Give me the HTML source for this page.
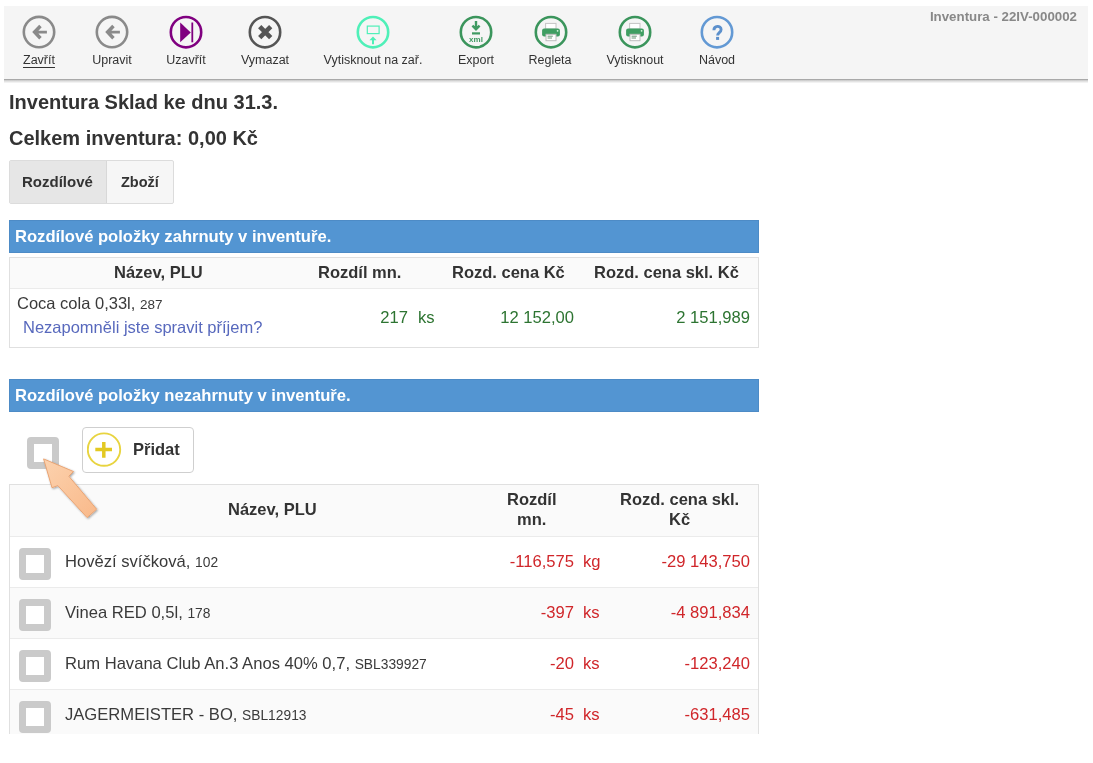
<!DOCTYPE html>
<html><head><meta charset="utf-8">
<style>
*{box-sizing:border-box}
html,body{margin:0;padding:0;background:#fff;width:1093px;height:763px;overflow:hidden}
body{font-family:"Liberation Sans",sans-serif;color:#333;position:relative}
.a{position:absolute;white-space:nowrap;line-height:normal}
#tb{position:absolute;left:4px;top:6px;width:1084px;height:73px;background:#f5f5f5}
#tbl{position:absolute;left:4px;top:79px;width:1084px;height:1px;background:#a9a9a9}
#tbs{position:absolute;left:4px;top:80px;width:1084px;height:3px;background:linear-gradient(#c6c6c6,#e6e6e6 55%,#f9f9f9)}
.ic{position:absolute;top:15px;width:34px;height:34px;overflow:visible}
.lb{position:absolute;top:53px;width:140px;text-align:center;font-size:12.5px;color:#333;white-space:nowrap}
h1{position:absolute;margin:0;left:9px;font-size:20px;font-weight:bold;color:#333;white-space:nowrap;line-height:normal}
.bar{position:absolute;left:9px;width:750px;height:33px;background:#5395d2;border:1px solid #4d8bc6}
.bt{position:absolute;left:15px;font-size:16.6px;font-weight:bold;color:#fff;white-space:nowrap}
.th{font-size:16.5px;font-weight:bold;color:#333}
.td{font-size:16.6px;color:#3a3a3a}
.sm{font-size:13.8px}
.grn{color:#2d7431}
.red{color:#d0262a}
.lnk{color:#5869bd}
.r{text-align:right}
.cb{position:absolute;width:32px;height:32px;border:7px solid #cacaca;border-radius:4px;background:#fff}
.hl{position:absolute;height:1px;background:#ebebeb}
.vl{position:absolute;width:1px;background:#dedede}
#wrap{position:absolute;left:0;top:0;width:1093px;height:763px;will-change:transform}
</style></head><body><div id="wrap">
<div id="tb"></div><div id="tbl"></div><div id="tbs"></div>

<!-- toolbar icons -->
<svg class="ic" style="left:22px" viewBox="0 0 34 34"><circle cx="17" cy="17.1" r="15.2" fill="none" stroke="#8a8a8a" stroke-width="2.6"/><path d="M10.2 17.1L17.2 9.8L19.7 12.3L16.4 15.8H24.9V18.5H16.4L19.7 21.9L17.2 24.4Z" fill="#8a8a8a"/></svg>
<div class="lb" style="left:-31px;text-decoration:underline;text-underline-offset:2.5px">Zavřít</div>

<svg class="ic" style="left:95px" viewBox="0 0 34 34"><circle cx="17" cy="17.1" r="15.2" fill="none" stroke="#8a8a8a" stroke-width="2.6"/><path d="M10.2 17.1L17.2 9.8L19.7 12.3L16.4 15.8H24.9V18.5H16.4L19.7 21.9L17.2 24.4Z" fill="#8a8a8a"/></svg>
<div class="lb" style="left:42px">Upravit</div>

<svg class="ic" style="left:169px" viewBox="0 0 34 34"><circle cx="17" cy="17.2" r="15.2" fill="none" stroke="#800080" stroke-width="2.6"/><path d="M11.2 7.5L21.8 17.4L11.2 27.3Z" fill="#800080"/><rect x="22.4" y="7.5" width="1.8" height="19.8" fill="#800080"/></svg>
<div class="lb" style="left:116px">Uzavřít</div>

<svg class="ic" style="left:248px" viewBox="0 0 34 34"><circle cx="17" cy="17.2" r="15.2" fill="none" stroke="#555" stroke-width="2.6"/><path d="M11.7 11.7L22.7 22.7M22.7 11.7L11.7 22.7" fill="none" stroke="#555" stroke-width="4.6"/></svg>
<div class="lb" style="left:195px">Vymazat</div>

<svg class="ic" style="left:356px" viewBox="0 0 34 34"><circle cx="17" cy="17.2" r="15.2" fill="none" stroke="#4ff0b8" stroke-width="2.6"/><rect x="11.3" y="11.1" width="11.8" height="7.5" fill="none" stroke="#4ff0b8" stroke-width="1.2"/><path d="M17 21.6L20.6 25.3H18V29.2H16V25.3H13.4Z" fill="#4ff0b8"/></svg>
<div class="lb" style="left:303px">Vytisknout na zař.</div>

<svg class="ic" style="left:459px" viewBox="0 0 34 34"><circle cx="17" cy="17.2" r="15.2" fill="none" stroke="#3b955c" stroke-width="2.6"/><path d="M17 6V14.2M13.4 10.6L17 14.2L20.6 10.6" fill="none" stroke="#3f9a62" stroke-width="2.4"/><rect x="13" y="17.3" width="8" height="2.2" fill="#3f9a62"/><text x="17" y="26.6" text-anchor="middle" font-size="8" font-weight="bold" fill="#3f9a62" font-family="Liberation Sans">xml</text></svg>
<div class="lb" style="left:406px">Export</div>

<svg class="ic" style="left:534px" viewBox="0 0 34 34"><circle cx="17" cy="17.2" r="15.2" fill="none" stroke="#3b955c" stroke-width="2.6"/><rect x="11.6" y="8.4" width="10.4" height="5.6" fill="#fff" stroke="#c4c4c4" stroke-width="1"/><rect x="8.1" y="13.6" width="17.8" height="8" rx="2" fill="#3f9e62"/><rect x="12" y="19.3" width="10" height="6.4" fill="#fff" stroke="#bcbcbc" stroke-width="1"/><path d="M13.6 21.2H18.8M13.6 23H18" stroke="#5a8a6a" stroke-width="0.9"/><circle cx="23.6" cy="15.8" r="0.9" fill="#d8f5e0"/></svg>
<div class="lb" style="left:480px">Regleta</div>

<svg class="ic" style="left:618px" viewBox="0 0 34 34"><circle cx="17" cy="17.2" r="15.2" fill="none" stroke="#3b955c" stroke-width="2.6"/><rect x="11.6" y="8.4" width="10.4" height="5.6" fill="#fff" stroke="#c4c4c4" stroke-width="1"/><rect x="8.1" y="13.6" width="17.8" height="8" rx="2" fill="#3f9e62"/><rect x="12" y="19.3" width="10" height="6.4" fill="#fff" stroke="#bcbcbc" stroke-width="1"/><path d="M13.6 21.2H18.8M13.6 23H18" stroke="#5a8a6a" stroke-width="0.9"/><circle cx="23.6" cy="15.8" r="0.9" fill="#d8f5e0"/></svg>
<div class="lb" style="left:565px">Vytisknout</div>

<svg class="ic" style="left:700px" viewBox="0 0 34 34"><circle cx="17" cy="17.2" r="15.2" fill="none" stroke="#6399d4" stroke-width="2.6"/><path d="M13.9 15.2C13.9 10.2 21.1 10.2 21.1 14.5C21.1 17.5 17.6 17.6 17.6 20.4" fill="none" stroke="#5c90cc" stroke-width="2.9"/><rect x="16.1" y="21.9" width="3" height="3" fill="#5c90cc"/></svg>
<div class="lb" style="left:647px">Návod</div>

<div class="a" style="right:16px;top:9px;font-size:13.3px;font-weight:bold;color:#888">Inventura - 22IV-000002</div>

<h1 style="top:91px">Inventura Sklad ke dnu 31.3.</h1>
<h1 style="top:127px">Celkem inventura: 0,00 Kč</h1>

<!-- tabs -->
<div class="a" style="left:9px;top:160px;width:165px;height:44px;border:1px solid #dcdcdc;border-radius:2px;background:#f6f6f6"></div>
<div class="a" style="left:10px;top:161px;width:97px;height:42px;background:#e6e6e6;border-right:1px solid #d8d8d8"></div>
<div class="a" style="left:22px;top:173px;font-size:15px;font-weight:bold;color:#333">Rozdílové</div>
<div class="a" style="left:121px;top:174px;font-size:14.5px;font-weight:bold;color:#333">Zboží</div>

<!-- section 1 -->
<div class="bar" style="top:220px"></div>
<div class="bt" style="top:227px">Rozdílové položky zahrnuty v inventuře.</div>

<div class="a" style="left:9px;top:257px;width:750px;height:91px;border:1px solid #e0e0e0;background:#fff"></div>
<div class="a" style="left:10px;top:258px;width:748px;height:30px;background:#fafafa"></div>
<div class="hl" style="left:10px;top:288px;width:748px"></div>
<div class="a th" style="left:114px;top:263px">Název, PLU</div>
<div class="a th" style="left:318px;top:263px">Rozdíl mn.</div>
<div class="a th" style="left:452px;top:263px">Rozd. cena Kč</div>
<div class="a th" style="left:594px;top:263px">Rozd. cena skl. Kč</div>
<div class="a td" style="left:17px;top:294px;font-size:16.5px">Coca cola 0,33l, <span style="font-size:13.5px">287</span></div>
<div class="a td lnk" style="left:23px;top:318px;font-size:16.5px">Nezapomněli jste spravit příjem?</div>
<div class="a td grn r" style="right:685px;top:308px">217</div>
<div class="a td grn" style="left:418px;top:308px">ks</div>
<div class="a td grn r" style="right:519px;top:308px">12 152,00</div>
<div class="a td grn r" style="right:343px;top:308px">2 151,989</div>

<!-- section 2 -->
<div class="bar" style="top:379px"></div>
<div class="bt" style="top:386px">Rozdílové položky nezahrnuty v inventuře.</div>

<div class="cb" style="left:27px;top:437px;width:32px;height:32px"></div>
<div class="a" style="left:82px;top:427px;width:112px;height:46px;border:1px solid #cfcfcf;border-radius:4px;background:#fff"></div>
<svg class="a" style="left:87px;top:432px" width="35" height="35" viewBox="0 0 35 35"><circle cx="17" cy="17.6" r="16.2" fill="none" stroke="#e8d440" stroke-width="1.9"/><path d="M16.8 10V25.8M8.3 17.6H25" stroke="#e3c922" stroke-width="3.5"/></svg>
<div class="a" style="left:133px;top:440px;font-size:16.5px;font-weight:bold;color:#333">Přidat</div>

<div class="a" style="left:9px;top:484px;width:750px;height:300px;border:1px solid #e0e0e0;background:#fff"></div>
<div class="a" style="left:10px;top:485px;width:748px;height:51px;background:#fafafa"></div>
<div class="hl" style="left:10px;top:536px;width:748px"></div>
<div class="a" style="left:10px;top:588px;width:748px;height:50px;background:#fafafa"></div>
<div class="hl" style="left:10px;top:587px;width:748px"></div>
<div class="hl" style="left:10px;top:638px;width:748px"></div>
<div class="hl" style="left:10px;top:689px;width:748px"></div>
<div class="a" style="left:10px;top:690px;width:748px;height:50px;background:#fafafa"></div>

<div class="a th" style="left:228px;top:500px">Název, PLU</div>
<div class="a th" style="left:507px;top:490px">Rozdíl</div>
<div class="a th" style="left:517px;top:510px">mn.</div>
<div class="a th" style="left:620px;top:490px">Rozd. cena skl.</div>
<div class="a th" style="left:669px;top:510px">Kč</div>

<div class="cb" style="left:19px;top:548px"></div>
<div class="cb" style="left:19px;top:599px"></div>
<div class="cb" style="left:19px;top:650px"></div>
<div class="cb" style="left:19px;top:701px"></div>

<div class="a td" style="left:65px;top:552px">Hovězí svíčková, <span class="sm">102</span></div>
<div class="a td" style="left:65px;top:603px">Vinea RED 0,5l, <span class="sm">178</span></div>
<div class="a td" style="left:65px;top:654px">Rum Havana Club An.3 Anos 40% 0,7, <span class="sm">SBL339927</span></div>
<div class="a td" style="left:65px;top:705px">JAGERMEISTER - BO, <span class="sm">SBL12913</span></div>

<div class="a td red r" style="right:519px;top:552px">-116,575</div>
<div class="a td red" style="left:583px;top:552px">kg</div>
<div class="a td red r" style="right:343px;top:552px">-29 143,750</div>
<div class="a td red r" style="right:519px;top:603px">-397</div>
<div class="a td red" style="left:583px;top:603px">ks</div>
<div class="a td red r" style="right:343px;top:603px">-4 891,834</div>
<div class="a td red r" style="right:519px;top:654px">-20</div>
<div class="a td red" style="left:583px;top:654px">ks</div>
<div class="a td red r" style="right:343px;top:654px">-123,240</div>
<div class="a td red r" style="right:519px;top:705px">-45</div>
<div class="a td red" style="left:583px;top:705px">ks</div>
<div class="a td red r" style="right:343px;top:705px">-631,485</div>

<!-- pointer arrow -->
<svg class="a" style="left:0;top:440px;overflow:visible" width="120" height="100" viewBox="0 440 120 100">
  <defs>
    <linearGradient id="ag" x1="0" y1="0" x2="1" y2="1"><stop offset="0" stop-color="#fcd2ae"/><stop offset="1" stop-color="#f9b98a"/></linearGradient>
    <filter id="sh" x="-30%" y="-30%" width="160%" height="160%"><feGaussianBlur in="SourceAlpha" stdDeviation="1.2"/><feOffset dx="0.5" dy="1" result="b"/><feComponentTransfer><feFuncA type="linear" slope="0.35"/></feComponentTransfer><feMerge><feMergeNode/><feMergeNode in="SourceGraphic"/></feMerge></filter>
  </defs>
  <path d="M43.6 458.9L73.5 471.5L68.8 476.2L96.6 509.2L87.1 517.6L57.8 485.6L52 487.7Z" fill="url(#ag)" stroke="#e9a474" stroke-width="1" stroke-linejoin="round" filter="url(#sh)"/>
</svg>

<div class="a" style="left:0;top:734px;width:1093px;height:29px;background:#fff"></div>
</div></body></html>
